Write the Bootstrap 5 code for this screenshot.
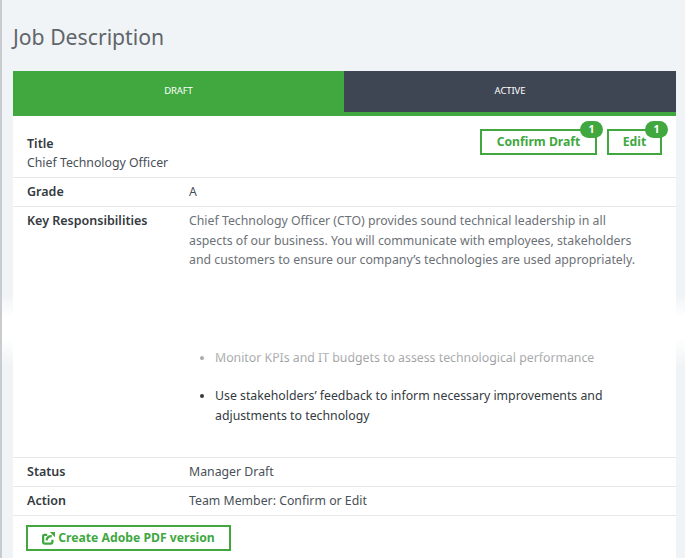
<!DOCTYPE html>
<html lang="en">
<head>
<meta charset="utf-8">
<title>Job Description</title>
<link href="https://cdn.jsdelivr.net/npm/bootstrap@5.3.0/dist/css/bootstrap.min.css" rel="stylesheet">
<style>
html,body{height:558px;overflow:hidden}
body{background:#f1f4f6;font-family:"Noto Sans",sans-serif;font-size:12.3px;color:#495057;position:relative;border-left:2px solid #c9cccf}
.pg{padding:0 9px 0 11px}
.pg-title{font-size:21.2px;font-weight:400;color:#5f656b;line-height:30px;margin:0;padding-top:22px;height:71px}
.tabbar{height:45px;background:#3f4653;border-bottom:4px solid #40a83f}
.tab-item{width:331px;flex:none;font-size:9.5px;color:#fff;letter-spacing:-.1px}
.tab-on{background:#40a83f}
.sheet{background:#fff;height:442px}
.line{border-bottom:1px solid #e6e8ea;padding:0 14px;display:flex}
.lbl{width:162px;flex:none;font-weight:600;font-size:12.5px;color:#343a40}
.r-one{height:29px;line-height:27px}
.r-title{height:62px}
.r-body{height:251px}
.lbl-key{padding-top:5px}
.jobname{line-height:19px;color:#495057;padding-top:18px}
.btn-pair{column-gap:10px;padding-top:13px}
.para{width:446px;line-height:19.5px;margin:4px 0 0;color:#6c7177}
.bul{margin:0;padding:78px 0 0 26px;width:446px;line-height:20px;color:#343a40}
.bul li{margin-bottom:18px}
.bul li:first-child{color:#8f9295}
.btn-out{border:2px solid #40a83f;border-radius:0;color:#40a83f;background:#fff;font-weight:700;font-size:12.2px;padding:0;height:26px;line-height:22px;position:relative}
.w-conf{width:117px}.w-edit{width:55px}
.pip{position:absolute;top:-10px;right:-8px;width:23px;height:17px;border-radius:9px;background:#40a83f;color:#fff;font-size:10.5px;font-weight:700;line-height:17px;text-align:center}
.btn-pdf{width:205px;height:26px;line-height:22px;margin:9px 0 0 13px;display:flex;align-items:center;justify-content:center;gap:3px}
.fade-band{position:absolute;left:-2px;right:0;top:296px;height:70px;background:linear-gradient(#ffffff00,#fff 30%,#fff 60%,#ffffff4d 85%,#ffffff00);pointer-events:none}
</style>
</head>
<body>
<div class="pg">
  <h1 class="pg-title">Job Description</h1>
  <div class="tabbar d-flex">
    <div class="tab-item tab-on d-flex align-items-center justify-content-center">DRAFT</div>
    <div class="tab-item flex-grow-1 d-flex align-items-center justify-content-center">ACTIVE</div>
  </div>
  <div class="sheet">
    <div class="line r-title justify-content-between">
      <div class="jobname"><div class="lbl">Title</div>Chief Technology Officer</div>
      <div class="d-flex btn-pair">
        <button class="btn btn-out w-conf" type="button">Confirm Draft<span class="pip">1</span></button>
        <button class="btn btn-out w-edit" type="button">Edit<span class="pip">1</span></button>
      </div>
    </div>
    <div class="line r-one"><div class="lbl">Grade</div><div>A</div></div>
    <div class="line r-body">
      <div class="lbl lbl-key">Key Responsibilities</div>
      <div>
        <p class="para">Chief Technology Officer (CTO) provides sound technical leadership in all aspects of our business. You will communicate with employees, stakeholders and customers to ensure our company’s technologies are used appropriately.</p>
        <ul class="bul">
          <li>Monitor KPIs and IT budgets to assess technological performance</li>
          <li>Use stakeholders’ feedback to inform necessary improvements and adjustments to technology</li>
        </ul>
      </div>
    </div>
    <div class="line r-one"><div class="lbl">Status</div><div>Manager Draft</div></div>
    <div class="line r-one"><div class="lbl">Action</div><div>Team Member: Confirm or Edit</div></div>
    <a class="btn btn-out btn-pdf" href="#">
      <svg width="13" height="13" viewBox="0 0 16 16" fill="none" stroke="#40a83f" stroke-width="2.8" aria-hidden="true"><path d="M12.8 9.5v3.2a1.6 1.6 0 0 1-1.6 1.6H3a1.6 1.6 0 0 1-1.6-1.6V5A1.6 1.6 0 0 1 3 3.4h3.4"/><path d="M5.6 10.4C6 7 8 5 12 5"/><path d="M9.6 0H16v6.400z" fill="#40a83f" stroke="none"/></svg>
      Create Adobe PDF version
    </a>
  </div>
</div>
<div class="fade-band"></div>
<script src="https://cdn.jsdelivr.net/npm/bootstrap@5.3.0/dist/js/bootstrap.bundle.min.js"></script>
</body>
</html>
